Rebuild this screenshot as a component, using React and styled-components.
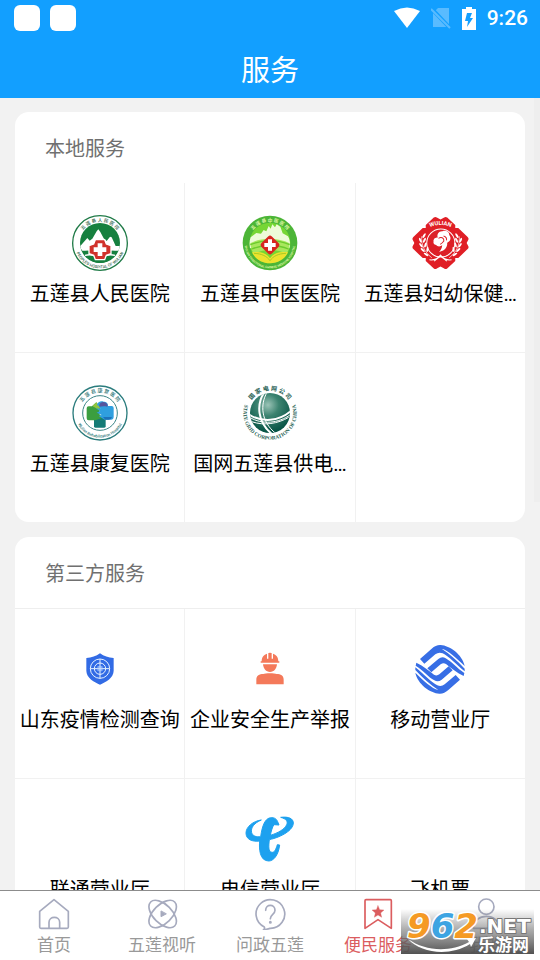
import React from 'react';
import styled, { createGlobalStyle } from 'styled-components';

const GlobalStyle = createGlobalStyle`
  * { box-sizing: border-box; }
  body {
    margin: 0;
    background: #f2f2f2;
    font-family: Roboto, "Noto Sans CJK SC", sans-serif;
    color: #000;
  }
  h1, h2, p { margin: 0; font-weight: 400; }
  a { color: inherit; text-decoration: none; }
`;

const Screen = styled.div`
  display: flex;
  flex-direction: column;
  height: 100vh;
  overflow: hidden;
`;

const Header = styled.header`
  flex: none;
  background: #129fff;
  color: #fff;
`;

const StatusBar = styled.div`
  display: flex;
  align-items: center;
  justify-content: space-between;
  height: 36px;
  padding: 0 12px 0 14px;
`;

const StatusGroup = styled.div`
  display: flex;
  align-items: center;
  gap: ${(p) => p.$gap}px;
`;

const Notice = styled.span`
  width: 26px;
  height: 26px;
  border-radius: 6px;
  background: #fff;
`;

const Clock = styled.time`
  font-size: 21px;
  font-weight: 500;
  line-height: 24px;
`;

const Title = styled.h1`
  padding: 14px 0 6px;
  font-size: 29px;
  line-height: 42px;
  text-align: center;
`;

const Content = styled.main`
  position: relative;
  flex: 1;
  min-height: 0;
  overflow-y: auto;
  scrollbar-width: none;
  display: flex;
  flex-direction: column;
  gap: 15px;
  padding: 14px 15px;
`;

const ScrollThumb = styled.span`
  position: absolute;
  top: 0;
  right: 0;
  width: 6px;
  height: 51%;
  background: #eeeeee;
`;

const Card = styled.section`
  flex: none;
  border-radius: 14px;
  background: #fff;
  overflow: hidden;
`;

const CardTitle = styled.h2`
  padding: 22px 30px 19px;
  font-size: 20px;
  line-height: 30px;
  color: #707070;
  border-bottom: ${(p) => (p.$ruled ? '1px solid #eeeeee' : '0')};
`;

const Grid = styled.div`
  display: grid;
  grid-template-columns: repeat(3, 1fr);
  gap: 1px;
  background: #f1f1f1;
`;

const Cell = styled.a`
  display: flex;
  flex-direction: column;
  align-items: center;
  gap: 7px;
  min-width: 0;
  height: 169px;
  padding-top: 30px;
  background: #fff;
`;

const IconBox = styled.span`
  display: flex;
  align-items: center;
  justify-content: center;
  height: 59px;
`;

const CellLabel = styled.span`
  font-size: 20px;
  line-height: 30px;
  white-space: nowrap;
`;

const Footer = styled.footer`
  position: relative;
  flex: none;
`;

const TabBar = styled.nav`
  display: flex;
  border-top: 1px solid #8c8c8c;
  background: #fff;
`;

const Tab = styled.a`
  flex: 1;
  display: flex;
  flex-direction: column;
  align-items: center;
  gap: 3px;
  padding: 7px 0 3px;
  font-size: 17px;
  line-height: 24px;
  color: ${(p) => (p.$active ? '#db5d5f' : '#999')};
`;

const Watermark = styled.div`
  position: absolute;
  right: 6px;
  bottom: 6px;
  height: 45px;
`;

const cross = (cx, cy, arm, half) =>
  `M${cx - half} ${cy - arm}h${half * 2}v${arm - half}h${arm - half}v${half * 2}h${half - arm}v${arm - half}h${-half * 2}v${half - arm}h${half - arm}v${-half * 2}h${arm - half}z`;

function RingText({ id, top, bottom, topSize, bottomSize, fill, bottomFill, rTop = 64, rBottom = 76, weight = 700 }) {
  return (
    <>
      <defs>
        <path id={`${id}-top`} d={`M${84 - rTop} 84a${rTop} ${rTop} 0 0 1 ${rTop * 2} 0`} />
        <path id={`${id}-bottom`} d={`M${84 - rBottom} 84a${rBottom} ${rBottom} 0 0 0 ${rBottom * 2} 0`} />
      </defs>
      <text fontSize={topSize} fill={fill} fontWeight={weight} textAnchor="middle">
        <textPath href={`#${id}-top`} startOffset="50%">{top}</textPath>
      </text>
      <text fontSize={bottomSize} fill={bottomFill || fill} fontWeight={weight} textAnchor="middle">
        <textPath href={`#${id}-bottom`} startOffset="50%">{bottom}</textPath>
      </text>
    </>
  );
}

const PeopleHospital = () => (
  <svg width="56" height="56" viewBox="0 0 168 168">
    <circle cx="84" cy="84" r="82" fill="#fff" stroke="#217b48" strokeWidth="4" />
    <RingText id="people" top="五 莲 县 人 民 医 院" bottom="PEOPLE'S HOSPITAL OF WULIAN" topSize="14" bottomSize="12" fill="#396a50" weight={500} />
    <circle cx="84" cy="84" r="60" fill="#16803f" />
    <path d="M25 93l21-24 7 8 8-6 13-22 5-6 6 8 10 19 9 8 10-13 5 2 12 26 12 0c0 6-2 10-4 14H31c-4-4-5-9-6-14z" fill="#fff" />
    <path d="M32 111c14-8 28-4 52 9 24-13 38-17 52-9-8 15-27 32-52 33-25-1-44-18-52-33z" fill="#16803f" />
    <path d="M39 121c18-5 32 0 45 9 13-9 27-14 45-9" fill="none" stroke="#fff" strokeWidth="4" />
    <path d="M70 74h28l5 13 14 5v24l-14 5-5 13H70l-5-13-14-5V92l14-5z" fill="#d0322b" stroke="#fff" strokeWidth="4" />
    <path d={cross(84, 104, 19, 7)} fill="#fff" />
  </svg>
);

const ChineseMedicineHospital = () => (
  <svg width="56" height="56" viewBox="0 0 168 168">
    <circle cx="84" cy="84" r="82" fill="#4cb537" />
    <RingText id="tcm" top="五 莲 县 中 医 医 院" bottom="WULIAN TRADITIONAL CHINESE MEDICINE HOSPITAL" topSize="14" bottomSize="9" fill="#dcf7a0" />
    <circle cx="84" cy="84" r="61" fill="#76d634" />
    <path d="M26 67l17-13 14 2 8-11 8 4 7-16 6 8 5-13 8 9 5-9 11 7 7 20 16 9c6 11 8 24 4 36-34-11-82-11-118 0-2-12-2-23 2-33z" fill="#edfbd9" />
    <path d="M25 85c30-18 84-18 118 0-2 15-4 23-10 32-24-16-72-16-98 0-5-9-9-20-10-32z" fill="#a9e75d" />
    <path d="M29 102c30-13 80-13 110 0M25 89c37-15 81-15 118 0" fill="none" stroke="#6ccb2d" strokeWidth="4" />
    <path d="M30 112c26-4 42 2 54 18 12-16 28-22 54-18-9 19-28 32-54 33-26-1-45-14-54-33z" fill="#ede22e" />
    <path d="M36 115c24 1 39 9 48 22 9-13 24-21 48-22" fill="none" stroke="#a6cc24" strokeWidth="3" />
    <rect x="62" y="68" width="44" height="44" rx="8" transform="rotate(45 84 90)" fill="#d7251f" />
    <path d={cross(84, 90, 17, 6)} fill="#fff" />
  </svg>
);

function Wheat({ flip }) {
  return (
    <g transform={flip ? 'translate(170 0) scale(-1 1)' : undefined} fill="#fff">
      <path d="M29 60c-2 25 8 47 30 64" fill="none" stroke="#fff" strokeWidth="2" />
      <ellipse cx="36" cy="58" rx="3" ry="8" transform="rotate(32 36 58)" />
      <ellipse cx="25" cy="72" rx="3" ry="8" transform="rotate(-25 25 72)" />
      <ellipse cx="37" cy="72" rx="3" ry="8" transform="rotate(28 37 72)" />
      <ellipse cx="27" cy="87" rx="3" ry="8" transform="rotate(-38 27 87)" />
      <ellipse cx="40" cy="86" rx="3" ry="8" transform="rotate(18 40 86)" />
      <ellipse cx="32" cy="101" rx="3" ry="8" transform="rotate(-48 32 101)" />
      <ellipse cx="46" cy="99" rx="3" ry="8" transform="rotate(8 46 99)" />
      <ellipse cx="42" cy="114" rx="3" ry="8" transform="rotate(-58 42 114)" />
    </g>
  );
}

const MaternalHospital = () => (
  <svg width="57" height="54" viewBox="0 0 170 160">
    <g fill="#e01f26">
      <path d="M41 40V26L65 4q5-3 9 0l11 6 11-6q4-3 9 0l24 22v14L85 82z" />
      <path d="M41 120v14l24 22q5 3 9 0l11-6 11 6q4 3 9 0l24-22v-14L85 78z" />
      <path d="M46 35H32L4 62q-4 4-2 8l5 10-5 10q-2 4 2 8l28 27h14l42-45z" />
      <path d="M124 35h14l28 27q4 4 2 8l-5 10 5 10q2 4-2 8l-28 27h-14L82 80z" />
    </g>
    <circle cx="86" cy="80" r="42" fill="#dc2027" stroke="#fff" strokeWidth="3" />
    <defs><path id="wulian-arc" d="M45 37q40-22 80 0" /></defs>
    <text fontSize="17" fontWeight="700" fill="#fff" textAnchor="middle">
      <textPath href="#wulian-arc" startOffset="50%">WULIAN</textPath>
    </text>
    <Wheat />
    <Wheat flip />
    <path d="M77 64c-4-10 3-20 14-19 8-4 21 1 20 11 7 8 4 19-6 23 1 9-3 18-12 23l-12 5c6-7 9-13 9-20-6 5-15 4-18-1-7-1-10-6-7-11 1-10 7-12 12-11z" fill="#fff" />
    <path d="M79 66c8-6 17-1 16 8-3 4-7 8-11 10M94 59c7 2 10 7 9 13" fill="none" stroke="#dc2027" strokeWidth="3" />
    <circle cx="71" cy="73" r="7" fill="#fff" />
    <path d="M52 130c14 2 25-4 33-14 8 10 19 16 33 14M66 134l19-15 19 15" fill="none" stroke="#fff" strokeWidth="3" />
  </svg>
);

const RehabHospital = () => (
  <svg width="56" height="56" viewBox="0 0 168 168">
    <circle cx="84" cy="84" r="81" fill="#fff" stroke="#2b7c7d" strokeWidth="4" />
    <RingText id="rehab" top="五 莲 县 康 复 医 院" bottom="Wulian Rehabilitation Hospital" topSize="15" bottomSize="12" fill="#2f7778" rTop={62} rBottom={74} weight={500} />
    <circle cx="84" cy="84" r="52" fill="#fff" stroke="#3b8586" strokeWidth="3" />
    <path d="M66 99h35v25q0 4-4 4H70q-4 0-4-4z" fill="#147b75" />
    <path d="M44 70q0-6 6-6h10l13-12 12 16-4 18 11 12-22 8H50q-6 0-6-6z" fill="#3b9e3f" />
    <path d="M61 63l12-11 12 16-5 6z" fill="#91c43e" />
    <path d="M75 59c2-8 12-13 20-9 9 0 14 6 13 13h11q6 0 6 6v28q0 7-7 7H98L80 93l9-3-15-7 10-5-12-8 13 1-4-7z" fill="#2f9fdf" />
    <path d="M82 59c3-8 13-11 20-5 6 3 5 8 4 11-10-3-17-1-24 0z" fill="#54549e" />
    <path d="M93 96h27q-2 8-10 8h-10z" fill="#1c72ba" />
  </svg>
);

const StateGrid = () => (
  <svg width="58" height="58" viewBox="-3 -3 174 174">
    <defs>
      <radialGradient id="globe" cx="45%" cy="30%" r="68%">
        <stop offset="0" stopColor="#9bc4b7" />
        <stop offset=".4" stopColor="#3c8370" />
        <stop offset="1" stopColor="#075345" />
      </radialGradient>
      <clipPath id="globe-clip"><circle cx="84" cy="84" r="60" /></clipPath>
      <path id="grid-top" d="M16 84a68 68 0 0 1 136 0" />
      <path id="grid-text" d="M10 54A80 80 0 1 0 158 54" />
    </defs>
    <text fontSize="18" fontWeight="700" fill="#285f54" textAnchor="middle">
      <textPath href="#grid-top" startOffset="50%">国 家 电 网 公 司</textPath>
    </text>
    <text fontSize="16" fontWeight="700" fontFamily="Liberation Serif, serif" fill="#285f54" textAnchor="middle">
      <textPath href="#grid-text" startOffset="50%">STATE GRID CORPORATION OF CHINA</textPath>
    </text>
    <circle cx="84" cy="84" r="60" fill="url(#globe)" />
    <g clipPath="url(#globe-clip)" fill="none" stroke="#fff">
      <path d="M67 22C43 57 45 112 91 148" strokeWidth="6" />
      <path d="M75 22C54 59 57 110 101 145" strokeWidth="3" />
      <path d="M22 89c38 24 88 21 125-11" strokeWidth="6" />
      <path d="M23 97c38 23 87 18 122-8M29 110c38 13 79 6 111-13" strokeWidth="3" />
    </g>
  </svg>
);

const ShieldTarget = () => (
  <svg width="28" height="32" viewBox="0 0 84 96">
    <path d="M42 1c12 9 25 13 41 14v38c0 22-25 35-41 42C26 88 1 75 1 53V15C17 14 30 10 42 1z" fill="#326be5" />
    <g fill="none" stroke="#e8f3ff" strokeWidth="3">
      <circle cx="42" cy="47" r="29" />
      <circle cx="42" cy="47" r="17" />
      <path d="M42 18v58M13 47h58" />
    </g>
    <rect x="34" y="39" width="16" height="16" rx="3" fill="#b8d4ff" opacity=".6" />
  </svg>
);

const Worker = () => (
  <svg width="28" height="33" viewBox="0 0 84 99" fill="#f4795a">
    <path d="M14 28h3c0-13 7-20 16-23v15h4V3q5-2 10 0v17h4V5c9 3 16 10 16 23h3v4H14z" />
    <path d="M21 37h42c-1 13-9 23-21 23S22 50 21 37z" />
    <path d="M1 97V83c0-12 9-17 21-17 5-3 34-3 40 0 12 0 21 5 21 17v14z" />
  </svg>
);

const MobileArcs = () => (
  <>
    <path d="M61 69L96 38Q109 26 123 27C150 29 188 55 195 90C170 66 145 42 126 38Q160 60 195 98V106C170 86 146 60 129 52Q117 47 107 55L74 83z" />
    <path d="M83 97L116 69Q127 60 138 67C156 77 172 97 194 111L192 120C170 110 153 95 139 84Q131 79 123 85L95 109z" />
  </>
);

const ChinaMobile = () => (
  <svg width="50" height="50" viewBox="46 24 150 150" fill="#376ee5">
    <MobileArcs />
    <g transform="rotate(180 121 100)"><MobileArcs /></g>
  </svg>
);

const ChinaTelecom = () => (
  <svg width="50" height="46" viewBox="44 50 150 138" fill="#1da1ef">
    <path d="M93 62C69 65 47 82 47 101c0 19 18 27 41 24-2 21-1 60 27 60 14 0 29-16 33-48l-7-1c-4 14-9 24-16 23-12-1-10-20-8-38 37-8 72-29 72-50 0-13-14-20-38-17 18 5 22 13 18 22-5 13-26 25-49 32 3-14 6-25 11-32l15 1-4-10c-4-11-15-14-25-11-12 4-21 20-26 56-13 2-24-2-27-12-4-15 8-29 29-38z" stroke="#1da1ef" strokeWidth="3" />
  </svg>
);

const navSvg = { width: 32, height: 32, viewBox: '0 0 96 96', fill: 'none', strokeWidth: 5, strokeLinejoin: 'round', strokeLinecap: 'round' };

const HomeIcon = () => (
  <svg {...navSvg} stroke="#a6aabe">
    <path d="M5 40L48 5l43 35v47q0 4-4 4H9q-4 0-4-4z" />
    <path d="M33 90V73c0-20 32-20 32 0v17" />
  </svg>
);

const AtomIcon = () => (
  <svg {...navSvg} stroke="#a6aabe">
    <ellipse cx="50" cy="48" rx="51" ry="28" transform="rotate(45 50 48)" />
    <ellipse cx="50" cy="48" rx="51" ry="28" transform="rotate(-45 50 48)" />
    <path d="M45 40v16l15-8z" fill="#a6aabe" strokeWidth="3" />
  </svg>
);

const QuestionIcon = () => (
  <svg {...navSvg} stroke="#a6aabe">
    <path d="M31 87A43 43 0 1 1 48 91q-11 3-20 5 5-3 3-9z" />
    <path d="M35 37c0-20 28-20 28 0 0 12-14 12-14 25" />
    <circle cx="49" cy="73" r="2" fill="#a6aabe" />
  </svg>
);

const BookmarkIcon = () => (
  <svg {...navSvg} stroke="#db5d5f">
    <path d="M9 8q0-3 3-3h73q3 0 3 3v83L48 65 9 91z" />
    <path d="M48 23l5 12 13 1-10 9 3 13-11-7-11 7 3-13-10-9 13-1z" fill="#db5d5f" strokeWidth="1" />
  </svg>
);

const PersonIcon = () => (
  <svg {...navSvg} stroke="#a6aabe">
    <circle cx="49" cy="26" r="23" />
    <path d="M10 91c0-48 78-48 78 0z" />
  </svg>
);

const SiteMark = () => (
  <svg width="133" height="45" viewBox="0 0 133 45" role="img" aria-label="962.NET 乐游网">
    <defs>
      <linearGradient id="shade" x2="0" y2="1">
        <stop offset="0" stopColor="#777" stopOpacity="0" />
        <stop offset=".45" stopColor="#777" stopOpacity=".6" />
        <stop offset="1" stopColor="#4c4c4c" stopOpacity=".97" />
      </linearGradient>
    </defs>
    <rect width="133" height="45" fill="url(#shade)" />
    <g fontFamily="DejaVu Sans, sans-serif" fontWeight="700" paintOrder="stroke" strokeLinejoin="round">
      <text x="6" y="29" fontSize="34" fontStyle="italic" stroke="#fff" strokeWidth="3">
        <tspan fill="#f59a24">9</tspan>
        <tspan fill="#3da4e2">6</tspan>
        <tspan fill="#f59a24">2</tspan>
      </text>
      <text x="78" y="24" fontSize="20" fill="#fff" stroke="#777" strokeWidth="2">.NET</text>
    </g>
    <path d="M7 30c17 12 41 14 61 3l-2-3 9-1-5 9-1-3C48 48 20 44 7 30z" fill="#fff" />
    <text x="77" y="42" fontSize="17" fontWeight="700" fill="#fff" stroke="#666" strokeWidth="1" paintOrder="stroke" fontFamily="Noto Sans CJK SC, sans-serif">乐游网</text>
  </svg>
);

const localServices = [
  ['五莲县人民医院', PeopleHospital],
  ['五莲县中医医院', ChineseMedicineHospital],
  ['五莲县妇幼保健…', MaternalHospital],
  ['五莲县康复医院', RehabHospital],
  ['国网五莲县供电…', StateGrid],
  null,
];

const partnerServices = [
  ['山东疫情检测查询', ShieldTarget],
  ['企业安全生产举报', Worker],
  ['移动营业厅', ChinaMobile],
  ['联通营业厅', null],
  ['电信营业厅', ChinaTelecom],
  ['飞机票', null],
];

const tabs = [
  ['首页', HomeIcon],
  ['五莲视听', AtomIcon],
  ['问政五莲', QuestionIcon],
  ['便民服务', BookmarkIcon],
  ['我的', PersonIcon],
];

function ServiceCard({ title, items, ruled }) {
  return (
    <Card>
      <CardTitle $ruled={ruled}>{title}</CardTitle>
      <Grid>
        {items.map((item, i) => {
          if (!item) return <Cell as="div" key={i} />;
          const [label, Icon] = item;
          return (
            <Cell href="#service" key={label}>
              <IconBox>{Icon && <Icon />}</IconBox>
              <CellLabel>{label}</CellLabel>
            </Cell>
          );
        })}
      </Grid>
    </Card>
  );
}

export default function App() {
  return (
    <Screen>
      <GlobalStyle />
      <Header>
        <StatusBar>
          <StatusGroup $gap={10}>
            <Notice />
            <Notice />
          </StatusGroup>
          <StatusGroup $gap={11}>
            <svg width="26" height="22" viewBox="0 0 26 22" fill="#fff"><path d="M0 4Q13-3 26 4L13 21z" /></svg>
            <svg width="20" height="22" viewBox="0 0 20 22">
              <path d="M7 1h11v19H2V6z" fill="#59bbff" />
              <path d="M0 1l19 20" stroke="#129fff" strokeWidth="4" />
              <path d="M0 2l19 19" stroke="#59bbff" strokeWidth="2" />
            </svg>
            <svg width="14" height="23" viewBox="0 0 14 23">
              <path d="M4 0h6v2h4v21H0V2h4z" fill="#fff" />
              <path d="M5 6h5l-2 5h3l-6 9 1-6H3z" fill="#129fff" />
            </svg>
            <Clock>9:26</Clock>
          </StatusGroup>
        </StatusBar>
        <Title>服务</Title>
      </Header>
      <Content>
        <ScrollThumb />
        <ServiceCard title="本地服务" items={localServices} />
        <ServiceCard title="第三方服务" items={partnerServices} ruled />
      </Content>
      <Footer>
        <TabBar>
          {tabs.map(([label, Icon]) => (
            <Tab key={label} href="#tab" $active={label === '便民服务'} aria-current={label === '便民服务' ? 'page' : undefined}>
              <Icon />
              <span>{label}</span>
            </Tab>
          ))}
        </TabBar>
        <Watermark><SiteMark /></Watermark>
      </Footer>
    </Screen>
  );
}
